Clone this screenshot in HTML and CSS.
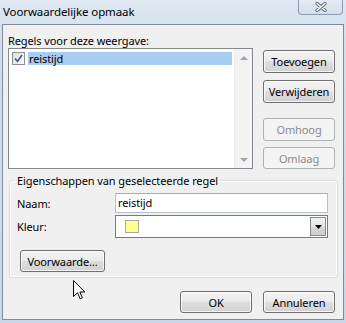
FILE: index.html
```html
<!DOCTYPE html>
<html lang="nl">
<head>
  <meta charset="UTF-8">
  <title>Voorwaardelijke opmaak</title>
  <link rel="stylesheet" href="styles.css">
</head>
<body>

  <div class="window">
    <!-- Title bar -->
    <div class="titlebar">
      <span class="title">Voorwaardelijke opmaak</span>
      <div class="close">
        <svg width="12" height="10" viewBox="0 0 12 10">
          <path d="M2 1.5 L10 8.5 M10 1.5 L2 8.5" stroke="#5c6876" stroke-width="3.2" stroke-linecap="round"/>
          <path d="M2 1.5 L10 8.5 M10 1.5 L2 8.5" stroke="#ffffff" stroke-width="1.4" stroke-linecap="round"/>
        </svg>
      </div>
    </div>

    <div class="client">
      <div class="caption">Regels voor deze weergave:</div>

      <div class="rules">
        <div class="listbox">
          <div class="items">
            <div class="item">
              <span class="check">
                <svg width="9" height="9" viewBox="0 0 9 9">
                  <path d="M1 4.5 L3.5 7.5 L8 1" fill="none" stroke="#3d5aa0" stroke-width="1.6"/>
                </svg>
              </span>
              <span class="item-text">reistijd</span>
            </div>
          </div>
          <div class="scrollbar">
            <span class="sb-btn"><span class="arrow-up"></span></span>
            <span class="sb-btn"><span class="arrow-down"></span></span>
          </div>
        </div>

        <div class="side-buttons">
          <div class="btn-group">
            <button class="btn btn-tall">Toevoegen</button>
            <button class="btn btn-tall">Verwijderen</button>
          </div>
          <div class="btn-group">
            <button class="btn btn-tall" disabled>Omhoog</button>
            <button class="btn" disabled>Omlaag</button>
          </div>
        </div>
      </div>

      <fieldset class="props">
        <legend>Eigenschappen van geselecteerde regel</legend>
        <div class="field">
          <label>Naam:</label>
          <div class="textbox">reistijd</div>
        </div>
        <div class="field">
          <label>Kleur:</label>
          <div class="combo">
            <span class="swatch"></span>
            <span class="drop">
              <svg width="7" height="4" viewBox="0 0 7 4"><path d="M0 0 H7 L3.5 4 Z" fill="#000"/></svg>
            </span>
          </div>
        </div>
        <button class="btn btn-cond">Voorwaarde...</button>
      </fieldset>

      <div class="footer-buttons">
        <button class="btn">OK</button>
        <button class="btn">Annuleren</button>
      </div>
    </div>

    <!-- mouse pointer -->
    <svg class="cursor" width="13" height="20" viewBox="0 0 13 20">
      <path d="M0.5 0.5 L0.5 16.5 L4.5 12.8 L7.2 18.8 L9.4 17.8 L6.8 12 L11.8 12 Z" fill="#fff" stroke="#000" stroke-width="1" stroke-linejoin="miter"/>
    </svg>
  </div>

</body>
</html>
```

FILE: styles.css
```css
/* Global */
body {
  margin: 0;
  padding: 0;
  font-family: "Noto Sans", "Open Sans", sans-serif;
  font-size: 11px;
  letter-spacing: -0.1px;
  line-height: 15px;
  color: #000;
  background: #cfdbe9;
}

.window {
  position: relative;
  width: 346px;
  height: 323px;
  overflow: hidden;
  background: linear-gradient(#dfe8f3, #d3dfec 40px, #cad7e6);
}

/* Title bar */
.titlebar {
  height: 24px;
  display: flex;
  justify-content: space-between;
  align-items: flex-start;
}
.title {
  padding: 4px 0 0 3px;
  font-size: 11.5px;
  color: #000;
}
.close {
  width: 45px;
  height: 15px;
  margin-right: 3px;
  box-sizing: border-box;
  border: 1px solid #8d9aab;
  border-top: none;
  border-radius: 0 0 4px 4px;
  background: linear-gradient(#e4ebf4, #d5dfeb);
  display: flex;
  align-items: center;
  justify-content: center;
}

/* Client area */
.client {
  width: 342px;
  height: 296px;
  margin-left: 2px;
  box-sizing: border-box;
  border: 1px solid #7f8b98;
  background: #f0f0f0;
  padding: 8px 8px 0 5px;
}
.caption {
  height: 15px;
}

/* Rules list + buttons */
.rules {
  display: flex;
  gap: 10px;
  height: 121px;
}
.listbox {
  width: 246px;
  height: 121px;
  box-sizing: border-box;
  border: 1px solid #828790;
  background: #fff;
  display: flex;
}
.items {
  flex: 1;
  padding: 3px 2px 0 3px;
}
.item {
  display: flex;
  align-items: center;
  height: 13px;
}
.check {
  width: 11px;
  height: 11px;
  border: 1px solid #8f8f8f;
  background: linear-gradient(135deg, #dcdcdc, #fbfbfb);
  display: flex;
  align-items: center;
  justify-content: center;
  margin-right: 3px;
}
.item-text {
  flex: 1;
  height: 13px;
  line-height: 13px;
  background: #a9cdf1;
  padding-left: 1px;
}
.scrollbar {
  width: 17px;
  background: #f3f3f3;
  border-left: 1px solid #ececec;
  display: flex;
  flex-direction: column;
  justify-content: space-between;
}
.sb-btn {
  height: 17px;
  display: flex;
  align-items: center;
  justify-content: center;
}
.arrow-up {
  width: 0;
  height: 0;
  border-left: 4px solid transparent;
  border-right: 4px solid transparent;
  border-bottom: 4px solid #a3a3a3;
}
.arrow-down {
  width: 0;
  height: 0;
  border-left: 4px solid transparent;
  border-right: 4px solid transparent;
  border-top: 4px solid #a3a3a3;
}

.side-buttons {
  width: 72px;
  padding-top: 2px;
  display: flex;
  flex-direction: column;
  justify-content: space-between;
}
.btn-group {
  display: flex;
  flex-direction: column;
  gap: 7px;
}
.btn-group + .btn-group {
  gap: 6px;
}

/* Buttons */
.btn {
  width: 72px;
  height: 22px;
  padding: 0;
  margin: 0;
  box-sizing: border-box;
  font-family: inherit;
  font-size: 11px;
  letter-spacing: -0.1px;
  color: #000;
  border: 1px solid #707070;
  border-radius: 3px;
  background: linear-gradient(#f3f3f3 0%, #ebebeb 48%, #dedede 52%, #d2d2d2 100%);
  box-shadow: inset 0 0 0 1px rgba(255, 255, 255, 0.75);
}
.btn-tall {
  height: 23px;
}
.btn:disabled {
  color: #8a8a8a;
  border-color: #adb2b5;
  background: #f4f4f4;
  box-shadow: none;
}

/* Properties group */
.props {
  margin: 4px 0 0 1px;
  width: 329px;
  box-sizing: border-box;
  padding: 5px 9px 5px 7px;
  border: 1px solid #d5dfe5;
  border-radius: 3px;
  box-shadow: inset 0 0 0 1px #fff;
}
.props legend {
  padding: 0 2px;
  margin-left: -2px;
  line-height: 15px;
}
.field {
  display: flex;
  align-items: center;
}
.field + .field {
  margin-top: 2px;
}
.field label {
  width: 98px;
}
.textbox {
  width: 213px;
  height: 20px;
  box-sizing: border-box;
  border: 1px solid #b5c1ce;
  border-top-color: #a4b0be;
  background: #fff;
  padding-left: 2px;
  line-height: 18px;
}
.combo {
  width: 213px;
  height: 23px;
  box-sizing: border-box;
  border: 1px solid #7a7a7a;
  background: #fff;
  display: flex;
  align-items: center;
  justify-content: space-between;
  padding: 0 1px 0 9px;
}
.swatch {
  width: 12px;
  height: 11px;
  background: #ffff8c;
  border: 1px solid #a8a8a8;
}
.drop {
  width: 16px;
  height: 19px;
  box-sizing: border-box;
  border: 1px solid #8a8a8a;
  background: linear-gradient(#f2f2f2, #e4e4e4 50%, #d6d6d6 51%, #cecece);
  display: flex;
  align-items: center;
  justify-content: center;
}
.btn-cond {
  width: 85px;
  margin: 12px 0 0 3px;
  display: block;
}

/* Dialog buttons */
.footer-buttons {
  display: flex;
  justify-content: flex-end;
  gap: 11px;
  margin-top: 13px;
}

.cursor {
  position: absolute;
  left: 73px;
  top: 280px;
}
```
